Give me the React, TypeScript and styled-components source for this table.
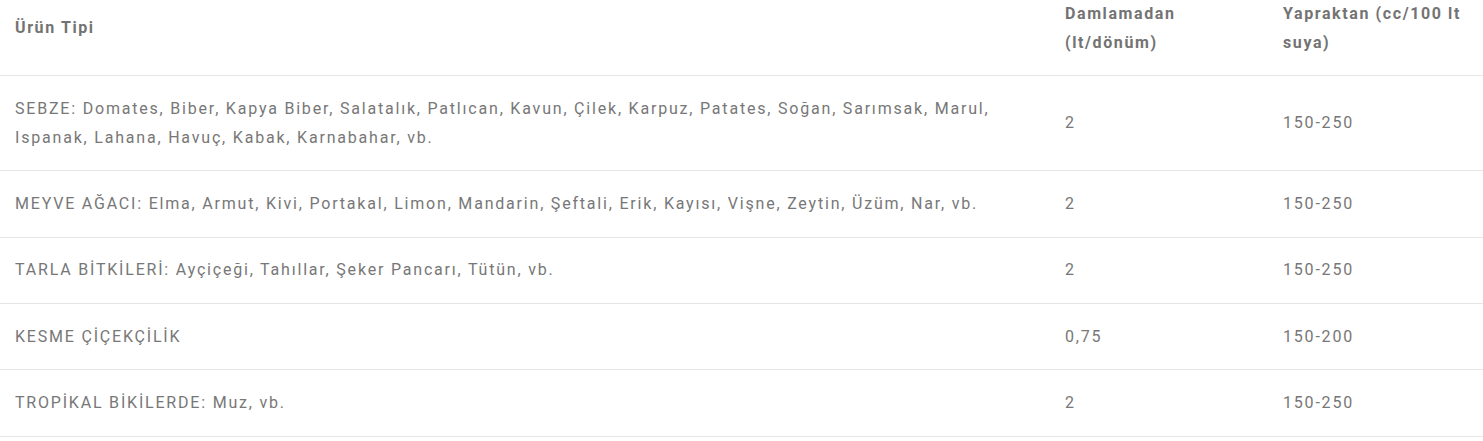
import React from "react";
import styled, { createGlobalStyle } from "styled-components";

const Global = createGlobalStyle`
  html, body { margin: 0; padding: 0; background: #ffffff; }
  body { font-family: Roboto, "Liberation Sans", Arial, sans-serif; }
`;

const Table = styled.table`
  width: 1483px;
  border-collapse: collapse;
  border-spacing: 0;
  table-layout: fixed;
  font-family: Roboto, "Liberation Sans", Arial, sans-serif;
  font-size: 16px;
  line-height: 28.8px;
  letter-spacing: 1.8px;
  color: #777777;
`;

const HeadCell = styled.th`
  text-align: left;
  vertical-align: middle;
  font-weight: 700;
  letter-spacing: 1.6px;
  color: #737373;
  padding: 0 15px 17.4px;
  border-bottom: 1px solid #e6e6e6;
`;

const Row = styled.tr`
  border-bottom: 1px solid #e6e6e6;
`;

const Cell = styled.td`
  vertical-align: middle;
  padding: 18.8px 15px 17.8px;
  font-weight: 400;
`;

type Item = { name: string; drip: string; leaf: string };

const rows: Item[] = [
  {
    name:
      "SEBZE: Domates, Biber, Kapya Biber, Salatalık, Patlıcan, Kavun, Çilek, Karpuz, Patates, Soğan, Sarımsak, Marul, Ispanak, Lahana, Havuç, Kabak, Karnabahar, vb.",
    drip: "2",
    leaf: "150-250",
  },
  {
    name:
      "MEYVE AĞACI: Elma, Armut, Kivi, Portakal, Limon, Mandarin, Şeftali, Erik, Kayısı, Vişne, Zeytin, Üzüm, Nar, vb.",
    drip: "2",
    leaf: "150-250",
  },
  {
    name: "TARLA BİTKİLERİ: Ayçiçeği, Tahıllar, Şeker Pancarı, Tütün, vb.",
    drip: "2",
    leaf: "150-250",
  },
  { name: "KESME ÇİÇEKÇİLİK", drip: "0,75", leaf: "150-200" },
  { name: "TROPİKAL BİKİLERDE: Muz, vb.", drip: "2", leaf: "150-250" },
];

export default function App() {
  return (
    <>
      <Global />
      <Table>
        <colgroup>
          <col style={{ width: 1050 }} />
          <col style={{ width: 218 }} />
          <col style={{ width: 215 }} />
        </colgroup>
        <thead>
          <tr>
            <HeadCell>Ürün Tipi</HeadCell>
            <HeadCell>Damlamadan (lt/dönüm)</HeadCell>
            <HeadCell>Yapraktan (cc/100 lt suya)</HeadCell>
          </tr>
        </thead>
        <tbody>
          {rows.map((r) => (
            <Row key={r.name}>
              <Cell>{r.name}</Cell>
              <Cell>{r.drip}</Cell>
              <Cell>{r.leaf}</Cell>
            </Row>
          ))}
        </tbody>
      </Table>
    </>
  );
}
